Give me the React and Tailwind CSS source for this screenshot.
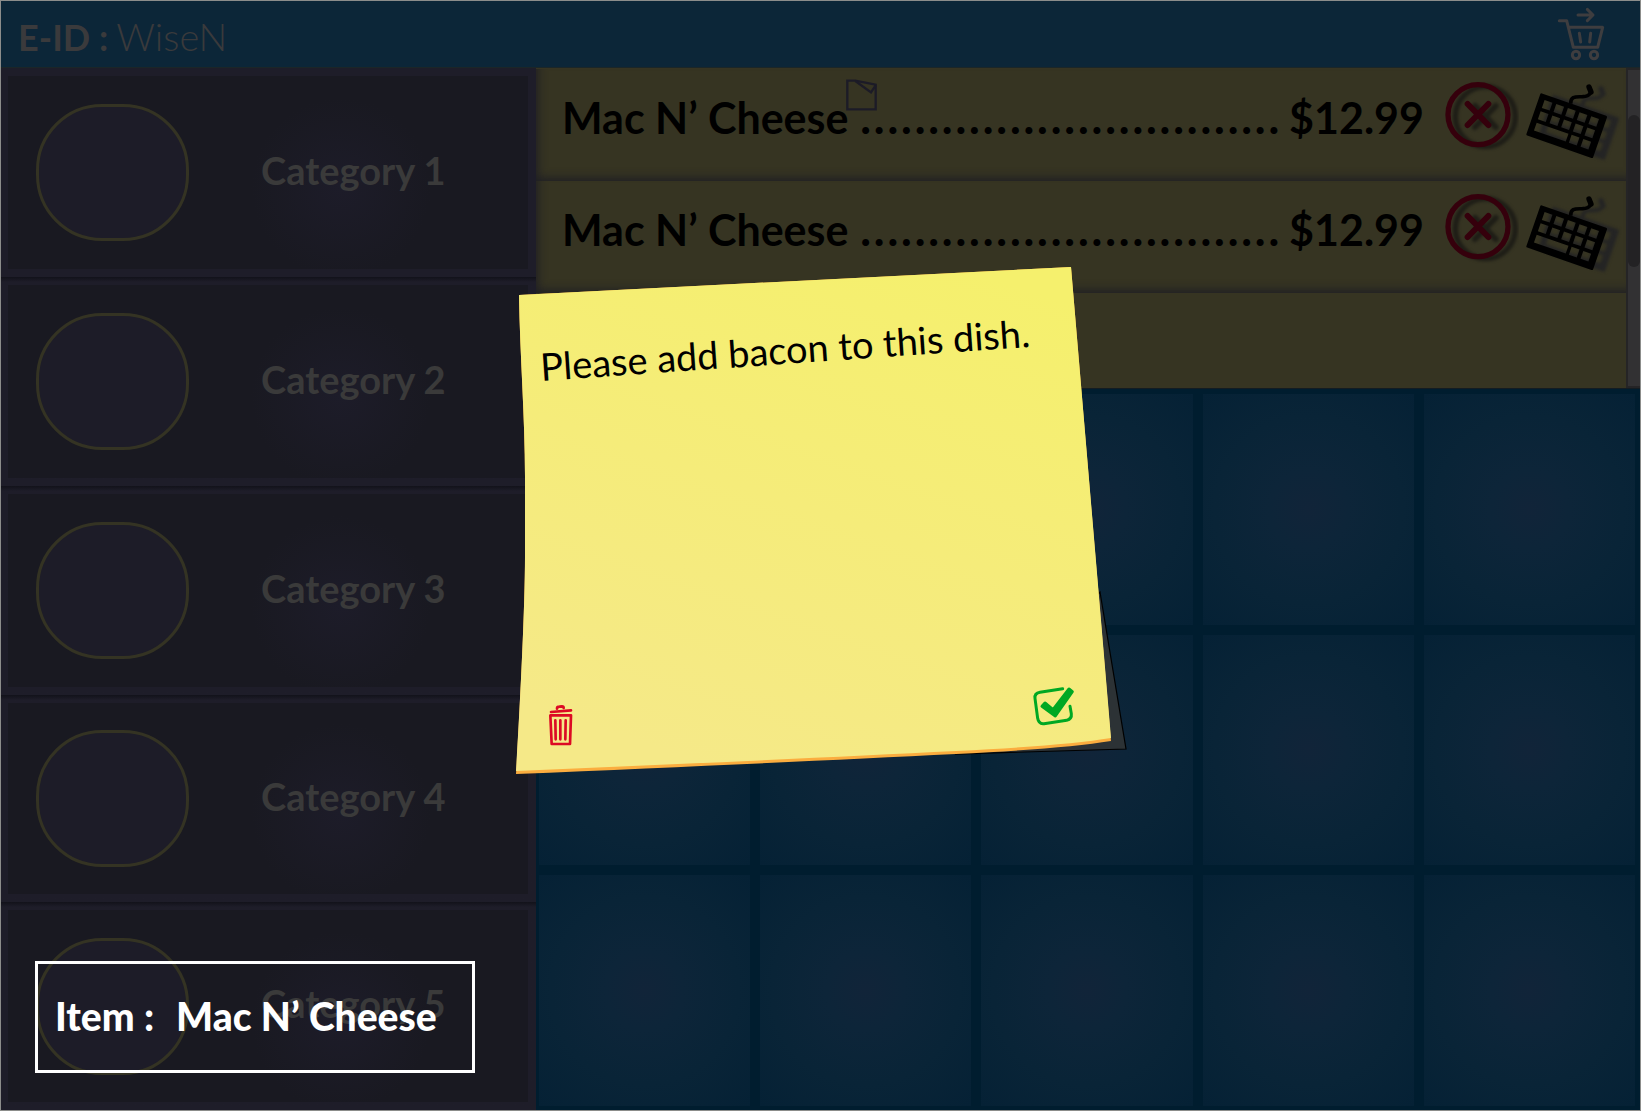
import React from "react";

const categories = ["Category 1", "Category 2", "Category 3", "Category 4", "Category 5"];
const orders = [
  { name: "Mac N’ Cheese", price: "$12.99", hasNote: true },
  { name: "Mac N’ Cheese", price: "$12.99", hasNote: false },
];

function CartIcon() {
  return (
    <svg viewBox="471 21 144 162" className="h-[54px] w-12" fill="none" stroke="#3e3d3f" strokeWidth="9" strokeLinecap="round" strokeLinejoin="round">
      <path d="M478 62H500L520 142H593L608 82H507" />
      <path d="M534 45H578M562 28L579 45L562 62" />
      <path d="M538 100L542 126M572 100L569 126" />
      <circle cx="528" cy="165" r="11" />
      <circle cx="582" cy="165" r="11" />
    </svg>
  );
}

function CrossShape() {
  return (
    <>
      <circle cx="114" cy="164" r="90" strokeWidth="16" />
      <path d="M83 132L145 195M145 132L83 195" strokeWidth="18" strokeLinecap="round" />
    </>
  );
}

function RemoveIcon() {
  return (
    <svg viewBox="12 60 225 216" className="h-[72px] w-[75px]" fill="none">
      <g stroke="#1e1d16" transform="translate(22 6)" className="blur-[4px]">
        <CrossShape />
      </g>
      <g stroke="#35000c">
        <CrossShape />
      </g>
    </svg>
  );
}

const keyHoles = [
  ...[0, 1, 2, 3, 4].map((i) => [18 + i * 37, 16, 25]),
  ...[0, 1, 2, 3, 4].map((i) => [18 + i * 37, 52, 25]),
  [18, 88, 101],
  [129, 88, 25],
  [166, 88, 25],
];
const keyboardPath =
  "M4 0H208Q212 0 212 4V130Q212 134 208 134H4Q0 134 0 130V4Q0 0 4 0Z" +
  keyHoles.map(([x, y, w]) => `M${x} ${y}v25h${w}v-25Z`).join("");

function KeyboardShape({ color }) {
  return (
    <>
      <path transform="translate(302 100) rotate(19.2)" d={keyboardPath} fill={color} fillRule="evenodd" />
      <path d="M392 132C392 108 408 112 428 111C452 109 456 98 448 83" fill="none" stroke={color} strokeWidth="11" />
      <path d="M453 97L447 82" fill="none" stroke={color} strokeWidth="16" strokeLinecap="round" />
    </>
  );
}

function KeyboardIcon() {
  return (
    <svg viewBox="252 70 294 240" className="h-20 w-[98px]">
      <g transform="translate(36 5)" className="blur-[4px]">
        <KeyboardShape color="#242424" />
      </g>
      <KeyboardShape color="#000000" />
    </svg>
  );
}

function NoteIcon() {
  return (
    <svg viewBox="944 54 99 99" className="size-[33px]" fill="none" stroke="#1c1b27" strokeWidth="7">
      <path d="M951 62H975L1036 74V148H951Z" />
      <path d="M975 63L1022 97L1036 76" />
    </svg>
  );
}

function TrashIcon() {
  return (
    <svg viewBox="54 38 78 132" className="h-11 w-[26px]" fill="none" stroke="#dc0a24" strokeWidth="8" strokeLinecap="round" strokeLinejoin="round">
      <path d="M63 65L123 60M81 55Q81 49 88 49L96 48Q101 48 101 53" />
      <path d="M61 75H123L120 161H65Z" />
      <path d="M76 90L77 147M91 90V147M107 90L106 147" />
    </svg>
  );
}

function CheckIcon() {
  return (
    <svg viewBox="36 72 132 126" className="h-[42px] w-11" fill="none" stroke="#00a823" strokeWidth="9" strokeLinecap="round" strokeLinejoin="round">
      <path d="M128 83L60 94Q43 97 45 112L53 172Q56 190 72 188L140 178Q156 174 154 158L150 136" />
      <path d="M66 136L75 126L99 146L147 84L157 92L106 165Z" fill="#00a823" />
    </svg>
  );
}

function OrderRow({ order }) {
  return (
    <li className="flex h-28 items-start bg-[#363422] pl-[26px] pr-1 shadow-[inset_5px_-6px_10px_-3px_#1f1f24]">
      <div className="relative mt-[25px] flex min-w-0 flex-1 text-[43px] leading-[48px] font-bold text-black">
        <span className="whitespace-nowrap">{order.name}</span>
        <span className="mr-2.5 ml-3 flex flex-1 justify-between font-black">
          {Array.from({ length: 31 }, (_, i) => (
            <span key={i}>.</span>
          ))}
        </span>
        <span className="whitespace-nowrap">{order.price}</span>
        {order.hasNote && (
          <button type="button" aria-label="Open note" className="absolute -top-4 left-[283px]">
            <NoteIcon />
          </button>
        )}
      </div>
      <button type="button" aria-label="Remove item" className="mt-[11px] ml-5">
        <RemoveIcon />
      </button>
      <button type="button" aria-label="Write a note" className="mt-3.5 ml-[5px]">
        <KeyboardIcon />
      </button>
    </li>
  );
}

function StickyNote() {
  return (
    <div role="dialog" aria-label="Note" className="pointer-events-auto relative h-[508px] w-[612px]">
      <svg viewBox="0 0 612 508" className="h-full w-full">
        <defs>
          <linearGradient id="paper" x1="0.75" y1="0" x2="0.35" y2="1">
            <stop offset="0" stopColor="#f5f06d" />
            <stop offset="0.5" stopColor="#f5ec7a" />
            <stop offset="1" stopColor="#f5e988" />
          </linearGradient>
        </defs>
        <path d="M584 325L610 482L440 487Z" fill="#2c3235" stroke="#000" strokeWidth="1.2" />
        <path d="M3 28L555 0L595 474Q545 482 440 487Q260 496 0 507C4 440 9 340 9 290V210C9 150 4 90 3 28Z" fill="#fbad3f" />
        <path d="M3 28L555 0L595 471Q545 479 440 484Q260 493 0 504C4 440 9 340 9 290V210C9 150 4 90 3 28Z" fill="url(#paper)" />
      </svg>
      <p className="absolute top-[75px] left-[26px] origin-bottom-left -rotate-4 text-[38px] leading-[48px] whitespace-nowrap text-black">
        Please add bacon to this dish.
      </p>
      <button type="button" aria-label="Delete note" className="absolute bottom-7 left-8">
        <TrashIcon />
      </button>
      <button type="button" aria-label="Save note" className="absolute right-[52px] bottom-12">
        <CheckIcon />
      </button>
    </div>
  );
}

export default function App() {
  return (
    <div className="relative flex h-screen flex-col overflow-hidden border border-[#8c8d8b] bg-[#0c2638] font-['Lato',sans-serif]">
      <header className="flex h-[67px] shrink-0 items-center justify-between border-b border-[#1b2628] pr-[35px] pl-[17px] text-[#3a3a3c]">
        <h1 className="flex items-baseline gap-2 pt-1 text-[36px] leading-[48px]">
          <span className="font-bold">E-ID :</span>
          <span className="text-[38px] font-light">WiseN</span>
        </h1>
        <button type="button" aria-label="Send order">
          <CartIcon />
        </button>
      </header>

      <div className="flex min-h-0 flex-1">
        <nav aria-label="Categories" className="grid w-[535px] shrink-0 grid-rows-[209fr_209fr_209fr_207fr_208fr] bg-[#1e1d29]">
          {categories.map((name, i) => (
            <div key={name} className={i === 0 ? "p-2 pl-[7px]" : "bg-linear-to-b from-[#12121a] to-[#1e1d29] to-[5px] p-2 pl-[7px]"}>
              <button
                type="button"
                className="flex h-full w-full items-center bg-[#191921] bg-[radial-gradient(circle_at_64%_58%,#1d1c29,#191921_90px)] pl-7 text-left"
              >
                <span className="h-[137px] w-[153px] rounded-[66px] border-3 border-[#343323] bg-[#1d1c28]" />
                <span className="mb-1.5 ml-[72px] text-[38px] leading-[48px] font-bold text-[#3a3a3a]">{name}</span>
              </button>
            </div>
          ))}
        </nav>

        <main className="flex min-w-0 flex-1 flex-col">
          <section aria-label="Order" className="flex h-80 shrink-0 bg-[#363422]">
            <ul className="min-w-0 flex-1 pt-px">
              {orders.map((order, i) => (
                <OrderRow key={i} order={order} />
              ))}
            </ul>
            <div className="w-3.5 border-2 border-r-0 border-[#252426] bg-[#323133] pt-[45px]">
              <div className="h-[152px] rounded-full bg-[#232224]" />
            </div>
          </section>
          <section aria-label="Menu items" className="grid flex-1 grid-cols-5 grid-rows-3 gap-2.5 border-t border-[#141c22] bg-[#001d2f] pt-[5px] pr-[5px] pb-1 pl-[3px]">
            {Array.from({ length: 15 }, (_, i) => (
              <button
                key={i}
                type="button"
                aria-label={`Menu item ${i + 1}`}
                className="bg-[radial-gradient(circle,#112439,#0d2539_25%,#092437_60%,#052135)]"
              />
            ))}
          </section>
        </main>
      </div>

      <div className="pointer-events-none absolute inset-0 flex justify-center pt-[266px] pl-0.5">
        <StickyNote />
      </div>
      <div className="absolute bottom-[37px] left-[34px] flex h-28 w-[440px] items-center gap-[22px] border-3 border-white pb-0.5 pl-[17px] text-[39px] leading-[48px] font-black whitespace-nowrap text-white">
        <span>Item :</span>
        <span>Mac N’ Cheese</span>
      </div>
    </div>
  );
}
